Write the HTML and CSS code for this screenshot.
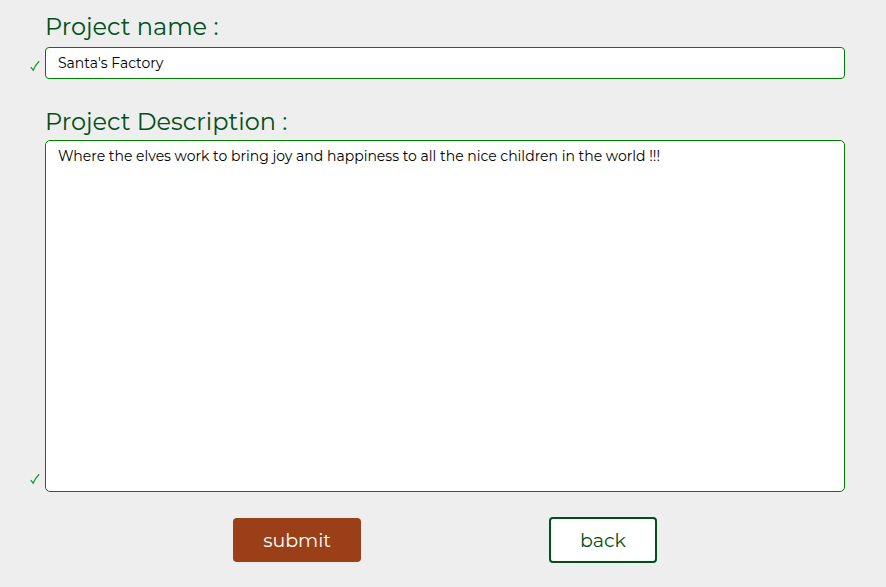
FILE: index.html
```html
<!DOCTYPE html>
<html lang="en">
<head>
<meta charset="utf-8">
<meta name="viewport" content="width=device-width, initial-scale=1">
<title>Project</title>
<link rel="stylesheet" href="styles.css">
</head>
<body>
<form class="project-form">
  <div class="field">
    <label class="label" for="name">Project name :</label>
    <svg class="check" viewBox="0 0 10 12" aria-hidden="true"><path d="M.8 7.2 3.2 10.2Q5.2 5 9.2 1.2"/></svg>
    <input class="control" id="name" type="text" value="Santa's Factory">
  </div>
  <div class="field field-long">
    <label class="label" for="description">Project Description :</label>
    <svg class="check" viewBox="0 0 10 12" aria-hidden="true"><path d="M.8 7.2 3.2 10.2Q5.2 5 9.2 1.2"/></svg>
    <textarea class="control description" id="description">Where the elves work to bring joy and happiness to all the nice children in the world !!!</textarea>
  </div>
  <div class="actions">
    <button class="button submit" type="submit">submit</button>
    <button class="button back" type="button">back</button>
  </div>
</form>
</body>
</html>
```
FILE: styles.css
```css
* {
  box-sizing: border-box;
}

body {
  margin: 0;
  background: #eee;
  font-family: Montserrat, Inter, sans-serif;
}

.project-form {
  padding: 9px 41px 24px 30px;
}

.field {
  display: grid;
  grid-template-columns: 10px 1fr;
  column-gap: 5px;
  align-items: end;
  margin-bottom: 25px;
}

.label {
  grid-column: 2;
  padding-bottom: 2px;
  color: #005019;
  font-size: 24px;
  font-weight: 400;
  line-height: 36px;
}

.field-long .label {
  padding-bottom: 0;
}

.check {
  width: 10px;
  height: 12px;
  margin-bottom: 7px;
  fill: none;
  stroke: #149632;
  stroke-width: 1.2;
}

.control {
  display: block;
  width: 100%;
  height: 32px;
  padding: 4px 12px;
  border: 1px solid green;
  border-radius: 4px;
  outline: none;
  background: #fff;
  color: #000;
  font: 400 14px/22px Montserrat, Inter, sans-serif;
}

.description {
  height: 352px;
  border-radius: 5px;
  resize: none;
}

.actions {
  display: flex;
  justify-content: space-evenly;
  align-items: center;
  margin-left: 15px;
}

.button {
  padding: 2px 6px 0;
  border-radius: 4px;
  font: 400 19px/24px Montserrat, Inter, sans-serif;
  cursor: pointer;
}

.submit {
  width: 128px;
  height: 44px;
  border: 0;
  background: #9a3f18;
  color: #fff;
}

.back {
  width: 108px;
  height: 46px;
  border: 2px solid #005019;
  background: #fff;
  color: #005019;
}
```
